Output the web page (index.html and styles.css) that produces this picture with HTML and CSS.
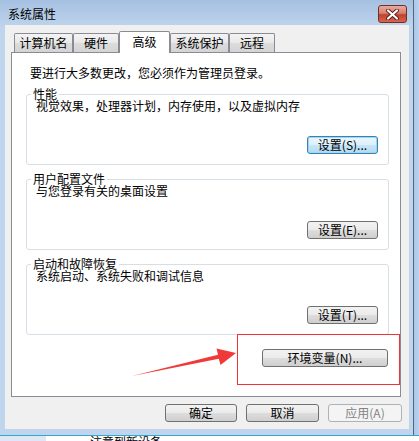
FILE: index.html
```html
<!DOCTYPE html>
<html lang="zh-CN">
<head>
    <meta charset="UTF-8">
    <title>系统属性</title>
    <link rel="stylesheet" href="styles.css">
</head>
<body>
    <div class="screen">
        <div class="top">
            <div class="window">
                <div class="titlebar">
                    <span class="title">系统属性</span>
                    <div class="close">
                        <svg width="15" height="11" viewBox="0 0 15 11">
                            <path d="M3 1.5 L12 9.5 M12 1.5 L3 9.5" stroke="#5a2018" stroke-width="4" stroke-linecap="round"/>
                            <path d="M3 1.5 L12 9.5 M12 1.5 L3 9.5" stroke="#ffffff" stroke-width="2.2" stroke-linecap="round"/>
                        </svg>
                    </div>
                </div>
                <div class="client">
                    <div class="tabs">
                        <div class="tab t1">计算机名</div>
                        <div class="tab t2">硬件</div>
                        <div class="tab t3 active">高级</div>
                        <div class="tab t4">系统保护</div>
                        <div class="tab t5">远程</div>
                    </div>
                    <div class="panel">
                        <div class="intro">要进行大多数更改，您必须作为管理员登录。</div>
                        <div class="group first">
                            <div class="group-title">性能</div>
                            <div class="group-desc">视觉效果，处理器计划，内存使用，以及虚拟内存</div>
                            <button class="btn btn-set focus">设置(S)...</button>
                        </div>
                        <div class="group">
                            <div class="group-title">用户配置文件</div>
                            <div class="group-desc">与您登录有关的桌面设置</div>
                            <button class="btn btn-set">设置(E)...</button>
                        </div>
                        <div class="group">
                            <div class="group-title">启动和故障恢复</div>
                            <div class="group-desc">系统启动、系统失败和调试信息</div>
                            <button class="btn btn-set">设置(T)...</button>
                        </div>
                        <div class="env-row">
                            <button class="btn btn-env">环境变量(N)...</button>
                        </div>
                    </div>
                    <div class="actions">
                        <button class="btn btn-ok">确定</button>
                        <button class="btn btn-cancel">取消</button>
                        <button class="btn btn-apply disabled">应用(A)</button>
                    </div>
                </div>
            </div>
            <div class="edge"></div>
        </div>
        <div class="below">
            <div class="below-side"></div>
            <div class="below-text">注意到新设备</div>
        </div>

        <div class="mark-box"></div>
        <svg class="mark-arrow" width="419" height="441" viewBox="0 0 419 441">
            <polygon points="132,376 218.8,358.7 220.5,365 236,353 216.5,348.5 218,354.7" fill="#f03a3a"/>
        </svg>
    </div>
</body>
</html>
```

FILE: styles.css
```css
body {
    margin: 0;
    width: 419px;
    height: 441px;
    overflow: hidden;
    background-color: #fff;
    font-family: "Noto Sans CJK SC", sans-serif;
    font-size: 12px;
    color: #000;
}

.screen {
    position: relative;
    display: flex;
    flex-direction: column;
    height: 441px;
}

.top {
    display: flex;
    height: 435px;
}

.window {
    width: 413px;
    display: flex;
    flex-direction: column;
    background-color: #bfd5ed;
}

.titlebar {
    height: 25px;
    box-sizing: border-box;
    display: flex;
    align-items: flex-start;
    justify-content: space-between;
    padding: 0 6px 0 8px;
    background: linear-gradient(#a5c0e1, #bdd3ec);
}

.title {
    line-height: 28px;
}

.close {
    margin-top: 5px;
    width: 29px;
    height: 18px;
    box-sizing: border-box;
    border: 1px solid #6f3027;
    border-radius: 3px;
    background: linear-gradient(#e8ab9e, #d68070 45%, #c2412e 55%, #d8654c);
    display: flex;
    align-items: center;
    justify-content: center;
}

.client {
    margin: 0 4px 6px 5px;
    height: 404px;
    background-color: #f0f0f0;
    display: flex;
    flex-direction: column;
}

.tabs {
    position: relative;
    z-index: 1;
    display: flex;
    align-items: flex-end;
    height: 21px;
    margin: 6px 0 0 9px;
}

.tab {
    height: 19px;
    box-sizing: border-box;
    border: 1px solid #898c95;
    border-bottom: none;
    border-radius: 2px 2px 0 0;
    background: linear-gradient(#f4f4f4, #e8e8e8 50%, #dcdcdc 51%, #d4d4d4);
    text-align: center;
    line-height: 18px;
}

.tab.active {
    height: 22px;
    margin-bottom: -1px;
    background: #fff;
    line-height: 20px;
}

.t1 { width: 59px; }
.t2 { width: 46px; }
.t3 { width: 51px; }
.t4 { width: 59px; }
.t5 { width: 46px; }

.panel {
    margin-left: 6px;
    width: 390px;
    height: 345px;
    box-sizing: border-box;
    border: 1px solid #898c95;
    background-color: #fff;
    padding: 12px 11px 0 14px;
    display: flex;
    flex-direction: column;
}

.intro {
    margin-left: 4px;
    line-height: 16px;
}

.group {
    height: 71px;
    box-sizing: border-box;
    margin-top: 14px;
    border: 1px solid #d5dfe5;
    border-radius: 3px;
    display: flex;
    flex-direction: column;
    align-items: flex-start;
}

.group.first {
    margin-top: 13px;
}

.group-title {
    margin: -7px 0 0 4px;
    padding: 0 2px;
    background-color: #fff;
    line-height: 12px;
}

.group-desc {
    margin: 0 0 0 9px;
    line-height: 12px;
}

.btn {
    height: 18px;
    box-sizing: border-box;
    padding: 0;
    border: 1px solid #707070;
    border-radius: 3px;
    background: linear-gradient(#f2f2f2, #ebebeb 50%, #dddddd 51%, #cfcfcf);
    font: inherit;
    line-height: 16px;
    color: #000;
    text-align: center;
}

.btn.focus {
    border-color: #3c7fb1;
    box-shadow: inset 0 0 0 1px #9ad8f7;
    background: linear-gradient(#ecf6fc, #dcf0fb 50%, #c6e6f8 51%, #b3daf1);
}

.btn.disabled {
    border-color: #adb2b5;
    background: #f4f4f4;
    color: #838383;
}

.btn-set {
    width: 71px;
    margin: auto 10px 10px auto;
}

.env-row {
    display: flex;
    justify-content: flex-end;
    margin-top: 14px;
    padding-right: 1px;
}

.btn-env {
    width: 126px;
}

.actions {
    display: flex;
    justify-content: flex-end;
    gap: 9px;
    margin: 7px 7px 0 0;
}

.btn-ok { width: 72px; }
.btn-cancel { width: 73px; }
.btn-apply { width: 74px; }

.edge {
    width: 6px;
    background: linear-gradient(90deg, #55677d 0, #55677d 1px, #a9c7e8 1px, #b8d2ee);
}

.below {
    height: 6px;
    box-sizing: border-box;
    border-top: 1px solid #36a6cf;
    display: flex;
    overflow: hidden;
}

.below-side {
    width: 46px;
    background-color: #dde8f5;
}

.below-text {
    margin-left: 44px;
    line-height: 14px;
    margin-top: -1px;
}

.mark-box {
    position: absolute;
    left: 237px;
    top: 334px;
    width: 161px;
    height: 49px;
    border: 1px solid #ee3535;
}

.mark-arrow {
    position: absolute;
    left: 0;
    top: 0;
    pointer-events: none;
}
```
